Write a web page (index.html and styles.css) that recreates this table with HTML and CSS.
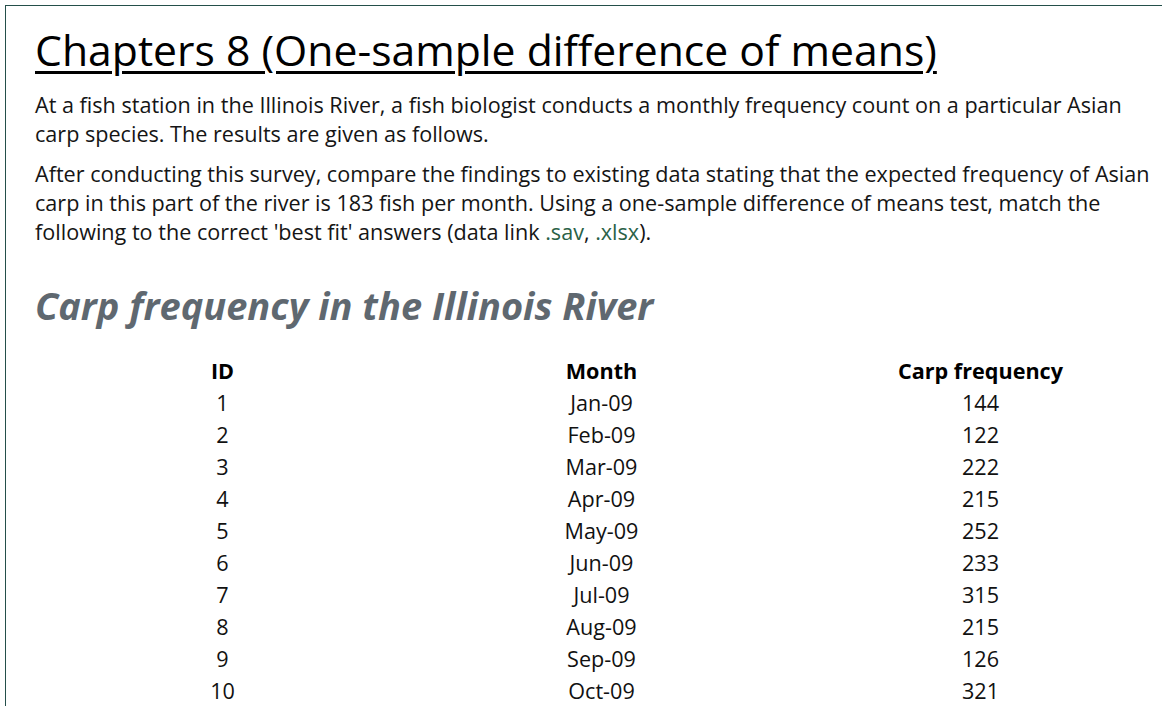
FILE: index.html
```html
<!DOCTYPE html>
<html lang="en">
<head>
<meta charset="utf-8">
<title>Chapters 8</title>
<link rel="stylesheet" href="styles.css">
</head>
<body>
<div class="page">
  <h1 class="title">Chapters 8 (One-sample difference of means)</h1>
  <p class="text">At a fish station in the Illinois River, a fish biologist conducts a monthly frequency count on a particular Asian carp species. The results are given as follows.</p>
  <p class="text">After conducting this survey, compare the findings to existing data stating that the expected frequency of Asian carp in this part of the river is 183 fish per month. Using a one-sample difference of means test, match the following to the correct 'best fit' answers (data link <a class="link" href="#">.sav</a>, <a class="link" href="#">.xlsx</a>).</p>
  <h2 class="subtitle">Carp frequency in the Illinois River</h2>
  <table class="data">
    <thead>
      <tr><th>ID</th><th>Month</th><th>Carp frequency</th></tr>
    </thead>
    <tbody>
      <tr><td>1</td><td>Jan-09</td><td>144</td></tr>
      <tr><td>2</td><td>Feb-09</td><td>122</td></tr>
      <tr><td>3</td><td>Mar-09</td><td>222</td></tr>
      <tr><td>4</td><td>Apr-09</td><td>215</td></tr>
      <tr><td>5</td><td>May-09</td><td>252</td></tr>
      <tr><td>6</td><td>Jun-09</td><td>233</td></tr>
      <tr><td>7</td><td>Jul-09</td><td>315</td></tr>
      <tr><td>8</td><td>Aug-09</td><td>215</td></tr>
      <tr><td>9</td><td>Sep-09</td><td>126</td></tr>
      <tr><td>10</td><td>Oct-09</td><td>321</td></tr>
      <tr><td>11</td><td>Nov-09</td><td>205</td></tr>
      <tr><td>12</td><td>Dec-09</td><td>198</td></tr>
    </tbody>
  </table>
</div>
</body>
</html>
```

FILE: styles.css
```css
html, body {
  margin: 0;
  padding: 0;
  overflow: hidden;
  background: #fff;
}
body {
  font-family: "Open Sans", "Noto Sans", sans-serif;
  color: #111;
}
.page {
  margin: 5px 0 0 5px;
  width: 1166px;
  border-top: 1px solid #244f4a;
  border-left: 1px solid #244f4a;
  padding: 17px 0 0 29px;
  box-sizing: border-box;
}
.title {
  font-size: 42.7px;
  font-weight: 400;
  text-decoration: underline;
  text-decoration-thickness: 3px;
  text-underline-offset: 5px;
  line-height: 54px;
  margin: 0 0 13px 0;
  color: #000;
}
.text {
  font-size: 21.6px;
  line-height: 29px;
  margin: 0 0 11px 0;
  color: #151515;
}
.link {
  color: #2a6147;
  text-decoration: none;
}
.subtitle {
  font-size: 38px;
  font-style: italic;
  font-weight: 700;
  color: #5f6870;
  margin: 35px 0 26px 0;
  line-height: 48px;
}
.data {
  width: 1137px;
  margin-left: -2px;
  border-collapse: collapse;
  table-layout: fixed;
  font-size: 21.6px;
  color: #111;
}
.data th, .data td {
  text-align: center;
  padding: 0;
  height: 32px;
  line-height: 32px;
}
.data th {
  font-weight: 700;
  color: #000;
}
```
